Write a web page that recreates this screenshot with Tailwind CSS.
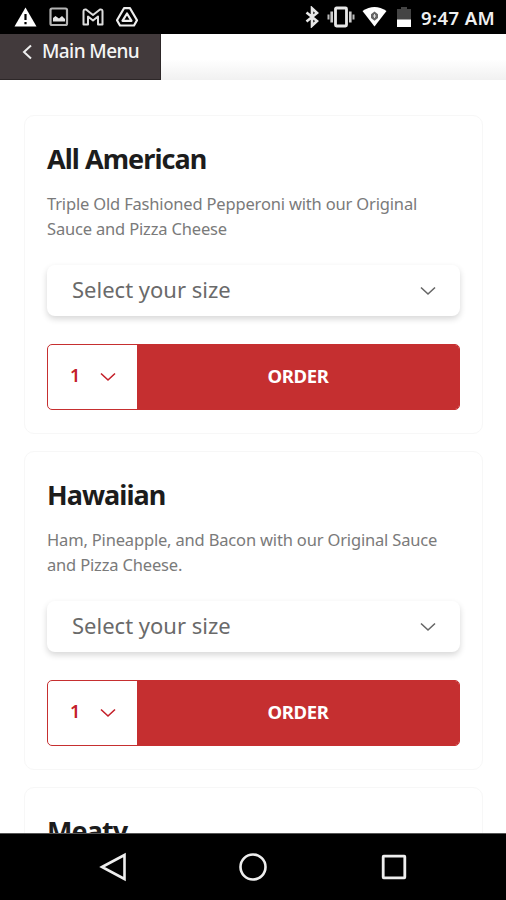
<!DOCTYPE html>
<html lang="en">
<head>
<meta charset="utf-8">
<title>Menu</title>
<script src="https://cdn.jsdelivr.net/npm/@tailwindcss/browser@4"></script>
</head>
<body class="w-[506px] h-[900px] overflow-hidden bg-white font-['Noto_Sans','Open_Sans',sans-serif] flex flex-col">
<header class="h-[34px] shrink-0 bg-black flex items-center justify-between pl-[14px] pr-[11px] text-white">
  <div class="flex items-center gap-[12px]">
    <svg class="w-[23px] h-[20px]" viewBox="0 0 23 20"><path d="M11.500 0.500L22.500 19.500H0.500Z" fill="#fff"/><path d="M11.500 7v6M11.500 15v2.300" stroke="#000" stroke-width="2.200"/></svg>
    <svg class="w-[20px] h-[20px]" viewBox="0 0 20 20"><rect x="1.500" y="1.500" width="16.500" height="16.500" rx="1.500" fill="none" stroke="#b4b4b4" stroke-width="2.200"/><path d="M4 14.500V11l2.500-2 3.500 2.500L13 9l3 3v2.500z" fill="#e4e4e4"/></svg>
    <svg class="w-[22px] h-[18px] ml-[1px]" viewBox="0 0 22 18"><path d="M1.500 16.500V3.500Q1.500 1 4 1.500L11 7l7-5.500Q20.500 1 20.500 3.500V16.500H16V8.500l-5 4-5-4V16.500Z" fill="none" stroke="#ddd" stroke-width="2" stroke-linejoin="round"/></svg>
    <svg class="w-[22px] h-[20px]" viewBox="0 0 22 20"><path d="M8 1.200H14L21 13.200 18 18.500H4L1 13.200Z" fill="none" stroke="#eee" stroke-width="2.200" stroke-linejoin="round"/><path d="M11 6.500L15.500 13.800H6.500Z" fill="none" stroke="#eee" stroke-width="2.200" stroke-linejoin="round"/></svg>
  </div>
  <div class="flex items-center">
    <svg class="w-[14px] h-[22px]" viewBox="0 0 14 22"><path d="M1.500 6.500l10.500 8.500-5 4.700V2.300l5 4.700L1.500 15.500" fill="none" stroke="#e8e8e8" stroke-width="2.600"/></svg>
    <svg class="w-[28px] h-[22px] ml-[8px]" viewBox="0 0 28 22"><rect x="8.500" y="2" width="11" height="18" rx="1" fill="none" stroke="#e8e8e8" stroke-width="2.800"/><path d="M4.700 5.500v11M23.300 5.500v11" stroke="#ccc" stroke-width="2.600"/><path d="M1.500 8.500v5M26.500 8.500v5" stroke="#bbb" stroke-width="2"/></svg>
    <svg class="w-[25px] h-[20px] ml-[7px]" viewBox="0 0 25 20"><path d="M0.500 4Q12.500-4 24.500 4L12.500 19.500Z" fill="#fff"/><path d="M9 7.200L12.500 4.500 16 7.200V11L12.500 13.800 9 11Z" fill="#666"/><path d="M12.500 7v4M11 9h3" stroke="#ddd" stroke-width="1"/></svg>
    <svg class="w-[14px] h-[20px] ml-[10px]" viewBox="0 0 14 20"><path d="M0 2H4V0H10V2H14V20H0Z" fill="#444"/><path d="M0 12.500H14V20H0Z" fill="#fff"/></svg>
    <span class="ml-[10px] text-[18.500px] leading-[26px] font-semibold tracking-[0.4px] w-[74px] whitespace-nowrap mt-[2px] text-[#f0f0f0]">9:47 AM</span>
  </div>
</header>
<div class="h-[46px] shrink-0 bg-linear-to-b from-white from-55% to-[#f1f1f1] flex">
  <button class="w-[161px] h-[46px] bg-[#423a3c] text-[#f5f5f5] flex items-start pl-[22px] pt-[4px] border-r border-b border-[#2d2728]">
    <svg class="w-[11px] h-[16px] mt-[6px]" viewBox="0 0 11 16"><path d="M9 1.500L2 8l7 6.500" fill="none" stroke="#eee" stroke-width="2"/></svg>
    <span class="ml-[9px] text-[19px] leading-[26px] font-medium tracking-[-0.6px] whitespace-nowrap">Main Menu</span>
  </button>
</div>
<main class="flex-1 min-h-0 overflow-hidden pt-[35px] pl-[24px] pr-[23px] flex flex-col gap-[18px]" id="list"></main>
<nav class="h-[67px] shrink-0 bg-black border-t border-[#555] flex items-center justify-center gap-[112px]">
  <svg class="w-[28px] h-[30px]" viewBox="0 0 28 30"><path d="M3 15L25.500 3V27Z" fill="none" stroke="#eee" stroke-width="2.600"/></svg>
  <svg class="w-[28px] h-[28px]" viewBox="0 0 28 28"><circle cx="14" cy="14" r="12.500" fill="none" stroke="#eee" stroke-width="2.600"/></svg>
  <svg class="w-[26px] h-[26px] ml-[2px]" viewBox="0 0 26 26"><rect x="2.200" y="2.200" width="21.600" height="21.600" rx="0.500" fill="none" stroke="#eee" stroke-width="2.800"/></svg>
</nav>
<template id="card">
  <article class="h-[319px] -mb-px shrink-0 border border-[#f7f7f7] rounded-[10px] px-[22px] pt-[26px]">
    <h2 class="text-[27px] leading-[34px] font-bold tracking-[-0.95px] text-[#1c1c1c] whitespace-nowrap"></h2>
    <div data-details>
      <p class="mt-[15px] h-[50px] text-[16.500px] leading-[25px] tracking-[-0.17px] text-[#7a7a7a] whitespace-pre"></p>
      <div class="mt-[24px] h-[51px] rounded-[8px] shadow-[0_3px_6px_rgba(0,0,0,0.16)] flex items-center justify-between pl-[25px] pr-[24px]">
        <span class="text-[22px] leading-[30px] -mt-[3px] text-[#6a6a6a] whitespace-nowrap">Select your size</span>
        <svg class="w-[16px] h-[10px] mt-[1px]" viewBox="0 0 16 10"><path d="M1 1.500L8 8 15 1.500" fill="none" stroke="#666" stroke-width="1.600"/></svg>
      </div>
      <div class="mt-[28px] h-[66px] w-[413px] border border-[#c62f30] rounded-[5px] overflow-hidden flex">
        <div class="w-[89px] flex items-center pl-[22px] text-[#c4202a]">
          <span class="text-[18px] font-semibold w-[15px] -mt-[3px]">1</span>
          <svg class="w-[16px] h-[10px] ml-[15px]" viewBox="0 0 16 10"><path d="M1 1.500L8 8 15 1.500" fill="none" stroke="#c4202a" stroke-width="1.600"/></svg>
        </div>
        <button class="flex-1 bg-[#c52f30] text-white text-[18.500px] tracking-[-0.4px] font-bold pb-[3px]"><span>ORDER</span></button>
      </div>
    </div>
  </article>
</template>
<script>
const items = [
  ["All American", "Triple Old Fashioned Pepperoni with our Original\nSauce and Pizza Cheese"],
  ["Hawaiian", "Ham, Pineapple, and Bacon with our Original Sauce\nand Pizza Cheese."],
  ["Meaty", null]
];
for (const [name, text] of items) {
  const c = document.getElementById("card").content.cloneNode(true);
  c.querySelector("h2").textContent = name;
  if (text) c.querySelector("p").textContent = text;
  else c.querySelector("[data-details]").remove();
  document.getElementById("list").append(c);
}
</script>
</body>
</html>
